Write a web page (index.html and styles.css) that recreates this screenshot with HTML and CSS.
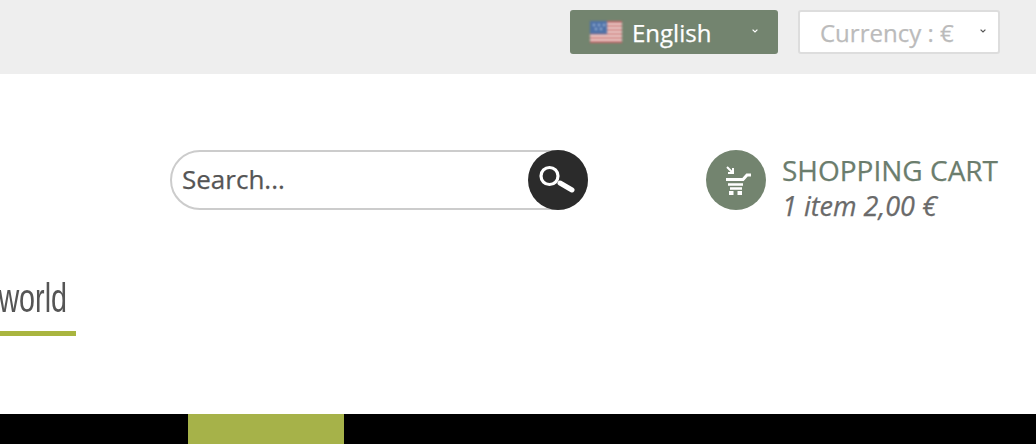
FILE: index.html
```html
<!DOCTYPE html>
<html lang="en">
<head>
    <meta charset="UTF-8">
    <meta name="viewport" content="width=device-width, initial-scale=1.0">
    <title>Shop</title>
    <link rel="stylesheet" href="styles.css">
</head>
<body>
    <div class="topbar">
        <div class="lang-select">
            <svg class="flag" viewBox="0 0 32 22" width="32" height="22">
                <rect width="32" height="22" fill="#efdcd8"/>
                <rect y="0" width="32" height="2" fill="#c4686a"/>
                <rect y="4" width="32" height="2" fill="#cf7a7a"/>
                <rect y="8" width="32" height="2" fill="#cf7a7a"/>
                <rect y="12" width="32" height="2" fill="#cf7a7a"/>
                <rect y="16" width="32" height="2" fill="#cf7a7a"/>
                <rect y="20" width="32" height="2" fill="#c4686a"/>
                <rect width="17" height="13" fill="#4f72a8"/>
                <g fill="#a9bedd">
                    <rect x="3" y="3" width="2" height="2"/>
                    <rect x="8" y="3" width="2" height="2"/>
                    <rect x="13" y="3" width="2" height="2"/>
                    <rect x="5" y="7" width="2" height="2"/>
                    <rect x="10" y="7" width="2" height="2"/>
                </g>
            </svg>
            <span class="lang-label">English</span>
            <svg class="chevron" viewBox="0 0 6 4" width="6" height="4">
                <path d="M.6.6 3 3 5.4.6" fill="none" stroke="#fff" stroke-width="1.2"/>
            </svg>
        </div>
        <div class="currency-select">
            <span class="currency-label">Currency : €</span>
            <svg class="chevron" viewBox="0 0 6 4" width="6" height="4">
                <path d="M.6.6 3 3 5.4.6" fill="none" stroke="#555" stroke-width="1.2"/>
            </svg>
        </div>
    </div>

    <header class="header">
        <div class="header-row">
            <form class="search">
                <div class="search-box">Search...</div>
                <div class="search-btn">
                    <svg viewBox="0 0 60 60" width="60" height="60">
                        <circle cx="21.500" cy="26" r="8.500" fill="none" stroke="#fff" stroke-width="3.200"/>
                        <path d="M32 33 44 40" stroke="#fff" stroke-width="5" stroke-linecap="round"/>
                    </svg>
                </div>
            </form>
            <div class="cart">
                <div class="cart-icon">
                    <svg viewBox="0 0 60 60" width="60" height="60">
                        <path d="M21 17 27 23M27 18V23H22" fill="none" stroke="#fff" stroke-width="2"/>
                        <path d="M20 29.500H37L41 25H45" fill="none" stroke="#fff" stroke-width="3"/>
                        <path d="M22 34.500H37M24 38.500H36" fill="none" stroke="#fff" stroke-width="2.500"/>
                        <rect x="23" y="41" width="4.500" height="4" fill="#fff"/>
                        <rect x="31.500" y="41" width="4.500" height="4" fill="#fff"/>
                    </svg>
                </div>
                <div class="cart-text">
                    <div class="cart-title">SHOPPING CART</div>
                    <div class="cart-info">1 item 2,00 €</div>
                </div>
            </div>
        </div>
        <div class="logo-tail">
            <span class="logo-word">world</span>
        </div>
    </header>

    <nav class="nav">
        <div class="nav-active"></div>
    </nav>
</body>
</html>
```

FILE: styles.css
```css
body {
    margin: 0;
    font-family: "Open Sans", sans-serif;
    background-color: #fff;
    overflow: hidden;
    -webkit-text-stroke: 0.25px;
}

.topbar {
    display: flex;
    justify-content: flex-end;
    align-items: flex-start;
    gap: 20px;
    height: 74px;
    box-sizing: border-box;
    padding: 10px 36px 0 0;
    background-color: #eee;
}

.lang-select {
    display: flex;
    align-items: center;
    width: 208px;
    height: 44px;
    box-sizing: border-box;
    padding: 0 20px;
    border-radius: 3px;
    background-color: #73846f;
    color: #fff;
    font-size: 24px;
}

.flag {
    margin-right: 10px;
    filter: blur(0.8px);
}

.lang-label {
    flex: 1;
}

.currency-select {
    display: flex;
    align-items: center;
    width: 202px;
    height: 44px;
    box-sizing: border-box;
    padding: 0 12px 0 20px;
    border: 2px solid #ddd;
    border-radius: 3px;
    background-color: #fff;
    color: #bbb;
    font-size: 24px;
}

.currency-label {
    flex: 1;
}

.chevron {
    margin-bottom: 3px;
}

.header {
    height: 340px;
    box-sizing: border-box;
    padding-top: 76px;
}

.header-row {
    display: flex;
    align-items: center;
    height: 60px;
    padding-left: 170px;
}

.search {
    display: flex;
    width: 418px;
    margin: 0;
}

.search-box {
    flex: 1;
    height: 60px;
    box-sizing: border-box;
    padding-left: 10px;
    border: 2px solid #ccc;
    border-radius: 30px;
    color: #555;
    font-size: 26px;
    line-height: 55px;
}

.search-btn {
    width: 60px;
    height: 60px;
    margin-left: -60px;
    border-radius: 50%;
    background-color: #2b2b2b;
}

.search-btn svg {
    filter: blur(0.3px);
}

.cart {
    display: flex;
    align-items: center;
    gap: 16px;
    margin-left: 118px;
}

.cart-icon {
    width: 60px;
    height: 60px;
    border-radius: 50%;
    background-color: #73846f;
}

.cart-icon svg {
    filter: blur(0.4px);
}

.cart-text {
    margin-top: 15px;
}

.cart-title {
    color: #6b7d6d;
    font-size: 28px;
    line-height: 36px;
}

.cart-info {
    color: #6a6a6a;
    font-size: 27px;
    font-style: italic;
    line-height: 36px;
}

.logo-tail {
    display: flex;
    justify-content: flex-end;
    width: 76px;
    height: 66px;
    box-sizing: border-box;
    margin-top: 60px;
    border-bottom: 5px solid #a9b53f;
    overflow: hidden;
}

.logo-word {
    margin-right: 9px;
    color: #555;
    font-family: "Liberation Sans", sans-serif;
    font-size: 41px;
    line-height: 56px;
    transform: scaleX(0.7);
    transform-origin: right center;
    filter: blur(0.5px);
    -webkit-text-stroke: 0;
}

.nav {
    height: 30px;
    padding-left: 188px;
    background-color: #000;
}

.nav-active {
    width: 156px;
    height: 30px;
    background-color: #a6b249;
}
```
